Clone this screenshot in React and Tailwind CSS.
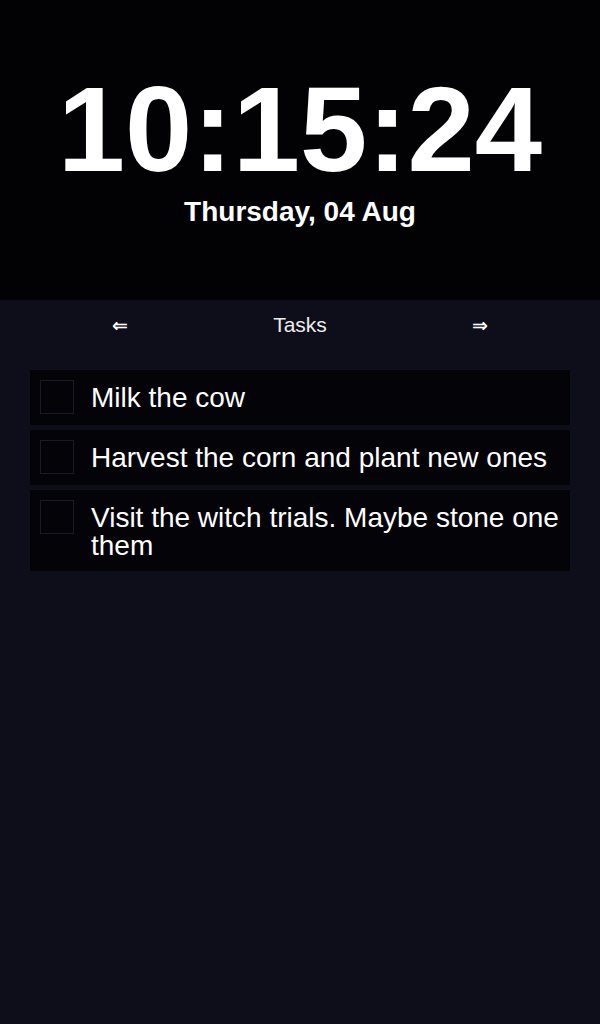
const tasks = [
  "Milk the cow",
  "Harvest the corn and plant new ones",
  "Visit the witch trials. Maybe stone one them",
];

function TaskRow({ text }) {
  return (
    <div className="flex items-start bg-[#030308] pt-[10px] pb-[11px] pl-[10px] pr-[4px]">
      <div className="w-[34px] h-[34px] shrink-0 border border-[#1b1a29]" />
      <div className="ml-[17px] pt-[4px] text-[28px] leading-[28px] text-white">{text}</div>
    </div>
  );
}

export default function App() {
  return (
    <div className="min-h-[1024px] w-[600px] bg-[#0e0d1a] font-['Liberation_Sans',Arial,sans-serif]">
      <div className="h-[300px] bg-[#020205] pt-[69px] flex flex-col items-center text-white">
        <div className="text-[121px] leading-none font-bold">10:15:24</div>
        <div className="mt-[8px] text-[28px] leading-none font-bold">Thursday, 04 Aug</div>
      </div>

      <div className="h-[50px] flex items-center justify-between px-[100px] text-[#ececec]">
        <button className="w-[40px] text-center text-[19px] font-bold text-white font-['DejaVu_Sans',sans-serif]">⇐</button>
        <span className="text-[21px]">Tasks</span>
        <button className="w-[40px] text-center text-[19px] font-bold text-white font-['DejaVu_Sans',sans-serif]">⇒</button>
      </div>

      <div className="mt-[20px] mx-[30px] flex flex-col gap-[5px]">
        {tasks.map((t) => (
          <TaskRow key={t} text={t} />
        ))}
      </div>
    </div>
  );
}
